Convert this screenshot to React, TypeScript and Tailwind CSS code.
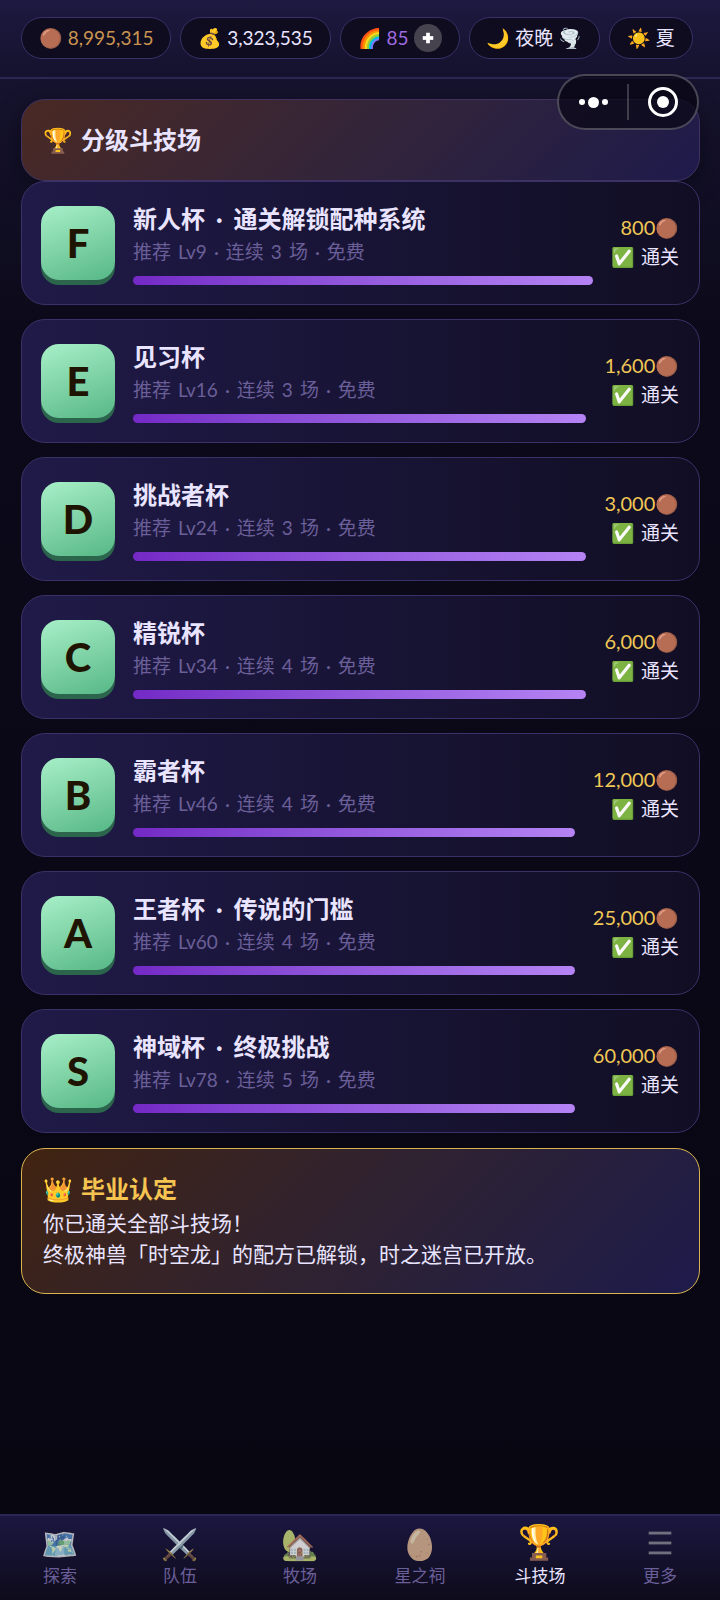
import type { ReactNode } from 'react'
import { Plus, Menu } from 'lucide-react'

const cups = [
  { rank: 'F', name: ['新人杯', '通关解锁配种系统'], level: 9, rounds: 3, reward: 800 },
  { rank: 'E', name: ['见习杯'], level: 16, rounds: 3, reward: 1600 },
  { rank: 'D', name: ['挑战者杯'], level: 24, rounds: 3, reward: 3000 },
  { rank: 'C', name: ['精锐杯'], level: 34, rounds: 4, reward: 6000 },
  { rank: 'B', name: ['霸者杯'], level: 46, rounds: 4, reward: 12000 },
  { rank: 'A', name: ['王者杯', '传说的门槛'], level: 60, rounds: 4, reward: 25000 },
  { rank: 'S', name: ['神域杯', '终极挑战'], level: 78, rounds: 5, reward: 60000 },
]

const tabs = [
  { icon: '🗺️', label: '探索' },
  { icon: '⚔️', label: '队伍' },
  { icon: '🏡', label: '牧场' },
  { icon: '🥚', label: '星之祠' },
  { icon: '🏆', label: '斗技场', active: true },
  { icon: null, label: '更多' },
]

function Pill({ children }: { children: ReactNode }) {
  return (
    <div className="flex h-[42px] items-center gap-[5px] rounded-full border border-[#383066] bg-[#0f0c1f] px-[17px] whitespace-nowrap">
      {children}
    </div>
  )
}

function CupCard({ cup }: { cup: (typeof cups)[number] }) {
  return (
    <li className="flex items-center gap-[18px] rounded-3xl border border-[#3a3168] bg-linear-to-r from-[#201a48] to-[#110e24] py-[19px] pr-5 pl-[19px]">
      <div className="flex h-[74px] w-[74px] shrink-0 items-center justify-center rounded-[18px] bg-linear-160 from-[#a7efc8] to-[#56b886] text-[40px] font-black text-[#1f1402] shadow-[0_5px_0_#2b654b]">
        {cup.rank}
      </div>
      <div className="min-w-0 flex-1">
        <h2 className="flex gap-[11px] text-[24px] leading-[36px] font-bold text-[#e9e4ff]">
          <span>{cup.name[0]}</span>
          {cup.name[1] && <span>·</span>}
          {cup.name[1] && <span>{cup.name[1]}</span>}
        </h2>
        <p className="flex gap-[7px] text-[19px] leading-[30px] text-[#6a5f98]">
          <span>推荐</span>
          <span>Lv{cup.level}</span>
          <span>·</span>
          <span>连续</span>
          <span>{cup.rounds}</span>
          <span>场</span>
          <span>·</span>
          <span>免费</span>
        </p>
        <div className="mt-[9px] h-[9px] rounded-full bg-linear-to-r from-[#7429c6] to-[#b583f4]" />
      </div>
      <div className="shrink-0 pb-[3px] text-right text-[19px] leading-[29px] text-[#e9e4ff]">
        <p className="flex items-center justify-end text-[#f0c755]">
          <span className="text-[20px]">{cup.reward.toLocaleString('en-US')}</span>
          <span>🟤</span>
        </p>
        <p className="flex justify-end gap-[6px]"><span>✅</span><span>通关</span></p>
      </div>
    </li>
  )
}

export default function App() {
  return (
    <div className="relative flex min-h-screen flex-col bg-[#090714] bg-linear-to-b from-[#1a1636] from-0% via-[#0c0a1a] via-20% to-[#080611] font-['Lato','Noto_Sans_CJK_SC','Noto_Color_Emoji',sans-serif] text-[#e9e4ff]">
      <header className="flex gap-[9px] border-b-2 border-[#2c2654] bg-linear-to-b from-[#1d1940] to-[#15122e] px-[21px] pt-[17px] pb-[18px] text-[19px]">
        <Pill><span>🟤</span><span className="text-[#c99450]">8,995,315</span></Pill>
        <Pill><span>💰</span><span>3,323,535</span></Pill>
        <Pill>
          <span>🌈</span>
          <span className="text-[#9f6be0]">85</span>
          <button aria-label="增加" className="flex h-7 w-7 items-center justify-center rounded-full bg-[#46434f] text-white">
            <Plus size={18} strokeWidth={5} strokeLinecap="butt" />
          </button>
        </Pill>
        <Pill><span>🌙</span><span>夜晚</span><span>🌪️</span></Pill>
        <Pill><span>☀️</span><span>夏</span></Pill>
      </header>

      <div className="absolute top-[74px] right-[21px] flex h-14 w-[142px] items-center rounded-full border-2 border-white/25 bg-[#080512]/70">
        <button aria-label="菜单" className="flex flex-1 items-center justify-center gap-[3px]">
          <span className="h-[6px] w-[6px] rounded-full bg-white" />
          <span className="h-[11px] w-[11px] rounded-full bg-white" />
          <span className="h-[6px] w-[6px] rounded-full bg-white" />
        </button>
        <span className="h-9 w-[2px] bg-white/20" />
        <button aria-label="关闭" className="flex flex-1 items-center justify-center">
          <span className="flex h-[30px] w-[30px] items-center justify-center rounded-full border-3 border-white">
            <span className="h-3 w-3 rounded-full bg-white" />
          </span>
        </button>
      </div>

      <main className="flex-1 px-5 py-5 pl-[21px]">
        <section className="rounded-3xl border border-[#3f3260] bg-linear-135 from-[#4a2923] to-[#1e1a4b] px-[21px] py-[22px] shadow-[0_6px_24px_#00000066]">
          <h1 className="flex gap-2 text-[24px] leading-[36px] font-bold">
            <span>🏆</span><span>分级斗技场</span>
          </h1>
        </section>

        <ul className="flex flex-col gap-[14px]">
          {cups.map(cup => <CupCard key={cup.rank} cup={cup} />)}
        </ul>

        <section className="mt-[15px] rounded-3xl border border-[#d9b350] bg-linear-135 from-[#41230f] to-[#1e1a4b] px-[21px] pt-[22px] pb-[24px]">
          <h2 className="flex gap-2 text-[24px] leading-[36px] font-bold text-[#f5c451]">
            <span>👑</span><span>毕业认定</span>
          </h2>
          <p className="text-[21px] leading-[31px]">
            你已通关全部斗技场！<br />
            终极神兽「时空龙」的配方已解锁，时之迷宫已开放。
          </p>
        </section>
      </main>

      <nav className="sticky bottom-0 grid h-[86px] grid-cols-6 border-t-2 border-[#2c2654] bg-linear-to-b from-[#1b1740] to-[#0e0b1c]">
        {tabs.map(tab => (
          <a
            key={tab.label}
            href="#"
            className={`flex flex-col items-center pt-[6px] text-[17px] leading-[24px] ${tab.active ? 'text-[#e9e4ff]' : 'text-[#6a5f98]'}`}
          >
            <span className={`flex h-[42px] items-center ${tab.active ? 'pb-1 text-[34px]' : 'text-[30px] opacity-80 brightness-110 grayscale-50'}`}>
              {tab.icon ?? <Menu size={34} strokeWidth={2} strokeLinecap="butt" className="text-[#7d7a8c]" />}
            </span>
            {tab.label}
          </a>
        ))}
      </nav>
    </div>
  )
}
